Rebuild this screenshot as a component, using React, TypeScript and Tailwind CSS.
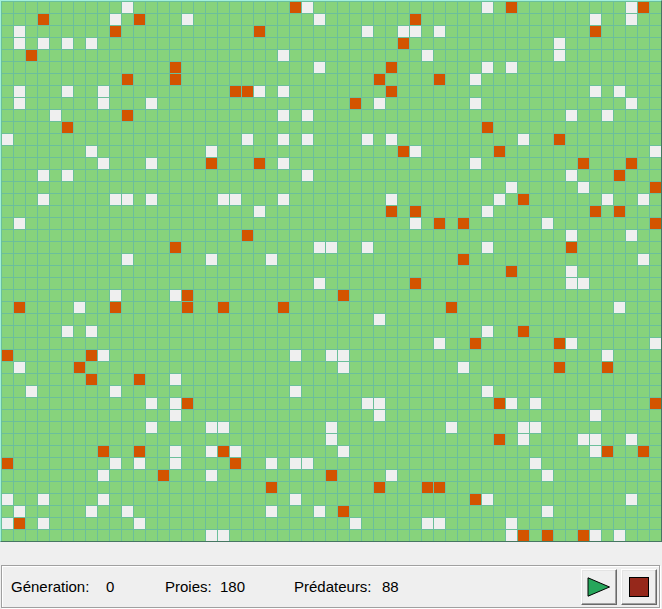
const COLUMNS = 55;

// One entry per row: columns occupied by prey, then by predators.
const ROWS: [number[], number[]][] = [
  [[10, 25, 40, 52], [24, 42, 53]],
  [[9, 15, 26, 49, 52], [3, 11, 34]],
  [[1, 30, 33, 34, 36], [9, 21, 49]],
  [[1, 3, 5, 7, 46], [33]],
  [[23, 35, 46], [2]],
  [[26, 40, 42], [14, 32]],
  [[39], [10, 14, 31, 36]],
  [[1, 5, 8, 21, 23, 49, 51], [19, 20, 32]],
  [[1, 8, 12, 31, 39, 52], [29]],
  [[4, 23, 25, 47, 50], [10]],
  [[], [5, 40]],
  [[0, 20, 23, 25, 30, 32, 43], [46]],
  [[7, 17, 34, 54], [33, 41]],
  [[8, 12, 23, 39], [17, 21, 48, 52]],
  [[3, 5, 25, 47], [51]],
  [[42, 48], [54]],
  [[3, 9, 10, 12, 18, 19, 23, 32, 41, 50, 53], [43]],
  [[21, 40], [32, 34, 49, 51]],
  [[1, 34, 45], [36, 38, 54]],
  [[47, 52], [20]],
  [[26, 27, 30, 40], [14, 47]],
  [[10, 17, 22, 53], [38]],
  [[47], [42]],
  [[26, 47, 48], [34]],
  [[9, 14], [15, 28]],
  [[6, 51], [1, 9, 15, 18, 23, 37]],
  [[31], []],
  [[5, 7, 40], [43]],
  [[36, 47, 54], [39, 46]],
  [[8, 24, 27, 28, 50], [0, 7]],
  [[1, 28, 38], [6, 46, 50]],
  [[14], [7, 11]],
  [[2, 9, 24, 40], []],
  [[12, 14, 30, 31, 42, 44], [15, 41, 54]],
  [[14, 31, 49], []],
  [[12, 17, 18, 27, 37, 43, 44], []],
  [[27, 43, 48, 49, 52], [41]],
  [[14, 17, 19, 28, 49], [8, 11, 18, 50, 53]],
  [[9, 11, 14, 22, 24, 25, 44], [0, 19]],
  [[8, 17, 32, 45], [13, 27]],
  [[], [22, 31, 35, 36]],
  [[0, 3, 8, 24, 40, 52], [39]],
  [[1, 7, 10, 22, 26, 45], [28]],
  [[0, 3, 11, 29, 35, 36, 42], [1]],
  [[17, 18, 42, 49, 51], [43, 45, 48]],
];

function cellColor(row: [number[], number[]], column: number) {
  if (row[0].includes(column)) return "bg-[#efefef]";
  if (row[1].includes(column)) return "bg-[#d35400]";
  return "bg-[#87d37c]";
}

function Field() {
  return (
    <main
      aria-label="Proies et prédateurs"
      className="grid grid-cols-[repeat(55,minmax(0,1fr))] gap-px border border-t-[#a2f0dc] border-r-[#467662] border-b-[#467662] border-l-[#a2f0dc] bg-[#6bbf9b] pt-px pl-px"
    >
      {ROWS.map((row, r) =>
        Array.from({ length: COLUMNS }, (_, c) => (
          <div key={`${r}-${c}`} className={`aspect-square ${cellColor(row, c)}`} />
        )),
      )}
    </main>
  );
}

const buttonStyle =
  "flex size-9 items-center justify-center border border-t-white border-l-white border-r-[#696969] border-b-[#696969] bg-[#efefef] shadow-[inset_-1px_-1px_0_#a0a0a0,inset_1px_1px_0_#e3e3e3]";

export default function App() {
  return (
    <div className="min-h-screen bg-[#efefef] font-['Liberation_Sans',Arial,sans-serif] text-[15px] leading-5 text-black">
      <Field />
      <footer className="mt-[23px] mr-0.5 ml-px flex items-center justify-between border border-[#a0a0a0] pt-[3px] pr-0.5 pb-0.5 pl-[9px] shadow-[1px_1px_0_#fff,inset_1px_1px_0_#fff]">
        <dl className="flex">
          <div className="flex w-[154px]">
            <dt className="w-[95px]">Géneration:</dt>
            <dd>0</dd>
          </div>
          <div className="flex w-[129px]">
            <dt className="w-[55px]">Proies:</dt>
            <dd>180</dd>
          </div>
          <div className="flex">
            <dt className="w-[88px]">Prédateurs:</dt>
            <dd>88</dd>
          </div>
        </dl>
        <div className="flex gap-1">
          <button type="button" aria-label="Démarrer" className={buttonStyle}>
            <svg width="24" height="20" viewBox="0 0 24 20" aria-hidden="true">
              <path d="M1 0.8 V19.2 L22.5 10 Z" fill="#26a65b" stroke="#000" strokeWidth="1" />
            </svg>
          </button>
          <button type="button" aria-label="Arrêter" className={buttonStyle}>
            <svg width="20" height="20" viewBox="0 0 20 20" aria-hidden="true">
              <rect x="0.5" y="0.5" width="19" height="19" fill="#96281b" stroke="#000" />
            </svg>
          </button>
        </div>
      </footer>
    </div>
  );
}
